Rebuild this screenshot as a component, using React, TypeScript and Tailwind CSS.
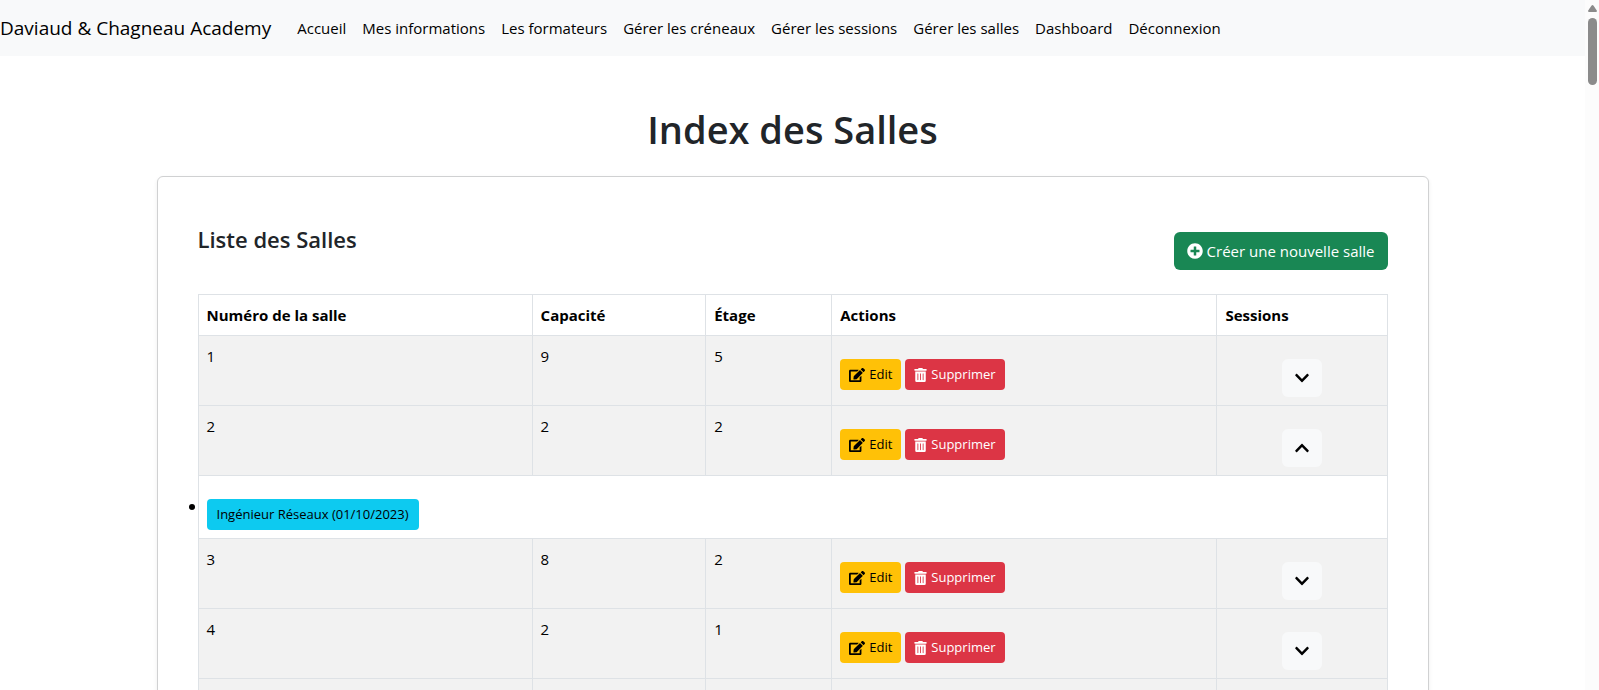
import { useState } from "react";
import {
  FaChevronDown,
  FaChevronUp,
  FaEdit,
  FaPlusCircle,
  FaTrashAlt,
} from "react-icons/fa";

type Room = {
  id: number;
  capacity: number;
  floor: number;
  sessions: string[];
};

const links = [
  "Accueil",
  "Mes informations",
  "Les formateurs",
  "Gérer les créneaux",
  "Gérer les sessions",
  "Gérer les salles",
  "Dashboard",
  "Déconnexion",
];

const rooms: Room[] = [
  { id: 1, capacity: 9, floor: 5, sessions: [] },
  { id: 2, capacity: 2, floor: 2, sessions: ["Ingénieur Réseaux (01/10/2023)"] },
  { id: 3, capacity: 8, floor: 2, sessions: [] },
  { id: 4, capacity: 2, floor: 1, sessions: [] },
  { id: 5, capacity: 6, floor: 3, sessions: [] },
];

const cell = "border border-[#dee2e6] p-2 text-left align-top";

function Navbar() {
  return (
    <nav className="flex items-center bg-[#f8f9fa] py-2 text-black">
      <a href="#" className="mr-[18px] py-1 text-[19px] leading-8 whitespace-nowrap">
        Daviaud &amp; Chagneau Academy
      </a>
      <ul className="flex">
        {links.map((label) => (
          <li key={label}>
            <a href="#" className="block p-2 text-[15px] leading-6 whitespace-nowrap">
              {label}
            </a>
          </li>
        ))}
      </ul>
    </nav>
  );
}

function RoomRows({ room }: { room: Room }) {
  const [open, setOpen] = useState(room.sessions.length > 0);
  return (
    <>
      <tr className="bg-[#f2f2f2]">
        <td className={cell}>{room.id}</td>
        <td className={cell}>{room.capacity}</td>
        <td className={cell}>{room.floor}</td>
        <td className={cell}>
          <div className="flex gap-1 pt-[15px] text-[13px] leading-[21px]">
            <button className="flex items-center gap-1 rounded-sm bg-[#ffc107] px-[9px] py-[5px] text-black">
              <FaEdit className="size-4" />
              Edit
            </button>
            <button className="flex items-center gap-1 rounded-sm bg-[#dc3545] px-[9px] py-[5px] text-white">
              <FaTrashAlt className="h-[14px] w-[13px]" />
              Supprimer
            </button>
          </div>
        </td>
        <td className={cell}>
          <div className="flex justify-center pt-[15px]">
            <button
              aria-label="Sessions"
              aria-expanded={open}
              onClick={() => setOpen(!open)}
              className="flex h-[38px] w-10 items-center justify-center rounded-md bg-[#f8f9fa] text-black"
            >
              {open ? <FaChevronUp className="size-4" /> : <FaChevronDown className="size-4" />}
            </button>
          </div>
        </td>
      </tr>
      {open && (
        <tr className="bg-white">
          <td colSpan={5} className={cell}>
            <ul>
              {room.sessions.map((s) => (
                <li key={s} className="relative pt-[15px]">
                  <span className="absolute top-5 -left-[18px] size-[6px] rounded-full bg-black" />
                  <button className="block rounded-sm bg-[#0dcaf0] px-[10px] py-[5px] text-[13px] leading-[21px] text-black">
                    {s}
                  </button>
                </li>
              ))}
            </ul>
          </td>
        </tr>
      )}
    </>
  );
}

function Scrollbar() {
  return (
    <div className="flex w-[14px] shrink-0 flex-col items-center gap-[6px] bg-[#fcfcfc] pt-[5px]">
      <svg viewBox="0 0 9 7" className="h-[7px] w-[9px]" fill="#8b8b8b">
        <path d="M3.6.6Q4.5-.5 5.4.6L8.8 5.600Q9.200 7 8 7H1Q-.2 7 .2 5.600Z" />
      </svg>
      <div className="h-[67px] w-[9px] rounded-full bg-[#8b8b8b]" />
    </div>
  );
}

export default function App() {
  return (
    <div className="flex h-screen overflow-hidden bg-white font-['Segoe_UI','Open_Sans',sans-serif] text-[15px] leading-6 text-[#212529]">
      <div className="min-w-0 flex-1 overflow-hidden">
        <Navbar />
        <main className="mx-auto max-w-[1320px] px-6 pt-12">
          <h1 className="mb-[22px] text-center text-[38px] leading-[50px] font-semibold">
            Index des Salles
          </h1>
          <section className="rounded-md border border-[#d0d1d2] bg-white p-10 shadow-[0_2px_4px_rgba(0,0,0,0.075)]">
            <div className="mb-6 flex items-start justify-between pt-2">
              <h2 className="text-[22px] leading-7 font-semibold">Liste des Salles</h2>
              <a
                href="#"
                className="mt-[7px] flex items-center gap-1 rounded-md bg-[#198754] px-[13px] py-[7px] text-white"
              >
                <FaPlusCircle className="size-4" />
                Créer une nouvelle salle
              </a>
            </div>
            <table className="w-full table-fixed border-collapse text-black">
              <colgroup>
                <col className="w-[28.1%]" />
                <col className="w-[14.6%]" />
                <col className="w-[10.6%]" />
                <col className="w-[32.4%]" />
                <col className="w-[14.3%]" />
              </colgroup>
              <thead>
                <tr className="font-bold">
                  <th className={cell}>Numéro de la salle</th>
                  <th className={cell}>Capacité</th>
                  <th className={cell}>Étage</th>
                  <th className={cell}>Actions</th>
                  <th className={cell}>Sessions</th>
                </tr>
              </thead>
              <tbody>
                {rooms.map((room) => (
                  <RoomRows key={room.id} room={room} />
                ))}
              </tbody>
            </table>
          </section>
        </main>
      </div>
      <Scrollbar />
    </div>
  );
}
